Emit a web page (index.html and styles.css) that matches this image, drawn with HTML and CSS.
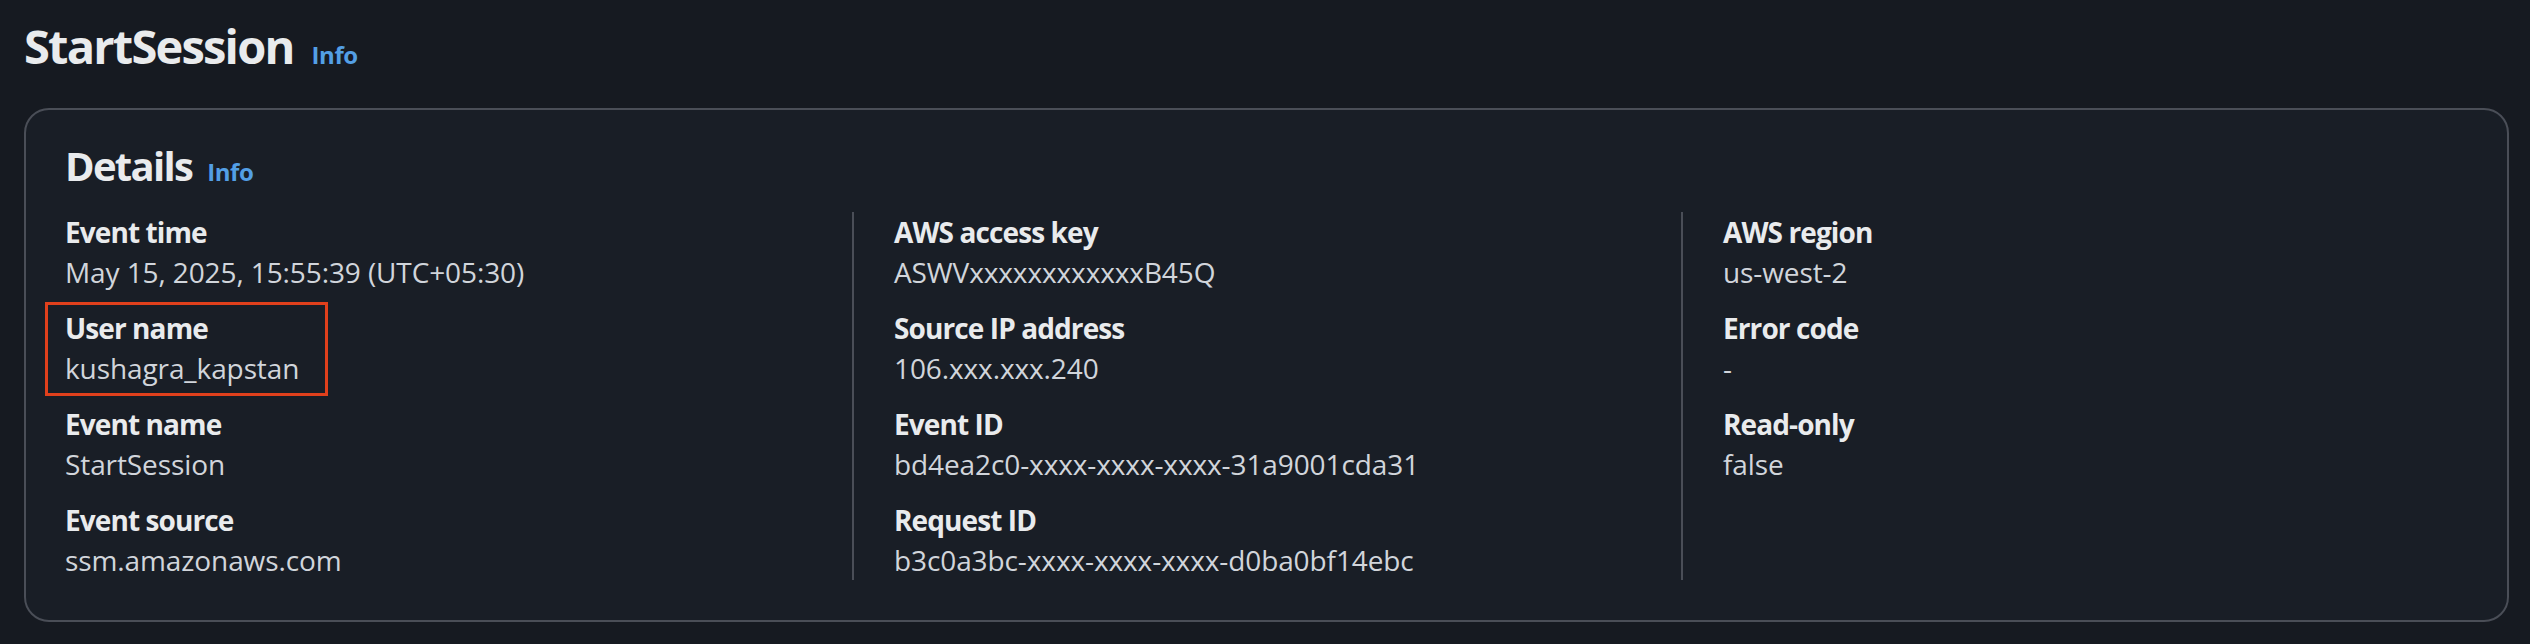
FILE: index.html
```html
<!DOCTYPE html>
<html lang="en">
<head>
<meta charset="utf-8">
<title>StartSession</title>
<link rel="stylesheet" href="styles.css">
</head>
<body>
<div class="page">
  <header class="page-header">
    <h1 class="title">StartSession</h1>
    <a class="info" href="#">Info</a>
  </header>
  <section class="card">
    <div class="card-header">
      <h2 class="card-title">Details</h2>
      <a class="info info-sm" href="#">Info</a>
    </div>
    <div class="columns">
      <div class="col">
        <div class="kv"><div class="k">Event time</div><div class="v">May 15, 2025, 15:55:39 (UTC+05:30)</div></div>
        <div class="kv highlight"><div class="k">User name</div><div class="v">kushagra_kapstan</div></div>
        <div class="kv"><div class="k">Event name</div><div class="v">StartSession</div></div>
        <div class="kv"><div class="k">Event source</div><div class="v">ssm.amazonaws.com</div></div>
      </div>
      <div class="col divided">
        <div class="kv"><div class="k">AWS access key</div><div class="v">ASWVxxxxxxxxxxxxB45Q</div></div>
        <div class="kv"><div class="k">Source IP address</div><div class="v">106.xxx.xxx.240</div></div>
        <div class="kv"><div class="k">Event ID</div><div class="v">bd4ea2c0-xxxx-xxxx-xxxx-31a9001cda31</div></div>
        <div class="kv"><div class="k">Request ID</div><div class="v">b3c0a3bc-xxxx-xxxx-xxxx-d0ba0bf14ebc</div></div>
      </div>
      <div class="col divided">
        <div class="kv"><div class="k">AWS region</div><div class="v">us-west-2</div></div>
        <div class="kv"><div class="k">Error code</div><div class="v">-</div></div>
        <div class="kv"><div class="k">Read-only</div><div class="v">false</div></div>
      </div>
    </div>
  </section>
</div>
</body>
</html>
```

FILE: styles.css
```css
* { box-sizing: border-box; }

html, body {
  margin: 0;
  background: #161a21;
}

body {
  font-family: "Open Sans", "Noto Sans", Arial, sans-serif;
  color: #d1d5db;
}

.page {
  padding: 16px 21px 20px 24px;
}

.page-header {
  display: flex;
  align-items: baseline;
  gap: 18px;
  height: 60px;
}

.title {
  margin: 0;
  font-size: 47px;
  line-height: 60px;
  font-weight: 700;
  color: #e9ebed;
  letter-spacing: -1.8px;
}

.info {
  font-size: 24px;
  font-weight: 700;
  color: #539fe5;
  text-decoration: none;
  letter-spacing: -0.4px;
}

.card {
  margin-top: 32px;
  border: 2px solid #4a4e57;
  border-radius: 25px;
  background: #191e26;
  padding: 32px 39px 40px 39px;
}

.card-header {
  display: flex;
  align-items: baseline;
  gap: 15px;
  height: 48px;
}

.card-title {
  margin: 0;
  font-size: 40px;
  line-height: 48px;
  font-weight: 700;
  color: #e9ebed;
  letter-spacing: -1.7px;
}

.columns {
  margin-top: 22px;
  display: grid;
  grid-template-columns: repeat(3, 1fr);
  column-gap: 84px;
}

.col {
  display: flex;
  flex-direction: column;
  align-items: flex-start;
  gap: 16px;
}

.col.divided {
  margin-left: -42px;
  padding-left: 40px;
  border-left: 2px solid #4a4e57;
}

.kv {
  font-size: 28px;
  line-height: 40px;
}

.k {
  font-weight: 700;
  color: #e9ebed;
  letter-spacing: -0.9px;
}

.v {
  color: #d1d5db;
  letter-spacing: -0.1px;
}

.kv.highlight {
  border: 3px solid #e0401c;
  margin: -6px 0 -8px -20px;
  padding: 3px 26px 5px 17px;
}
```
